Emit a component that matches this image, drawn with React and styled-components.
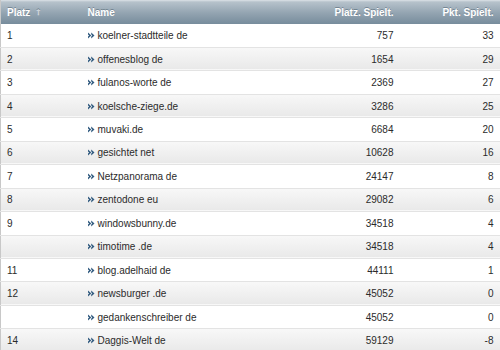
import React from "react";
import styled, { createGlobalStyle } from "styled-components";

const GlobalStyle = createGlobalStyle`
  html, body {
    margin: 0;
    padding: 0;
    background: #ffffff;
  }
  body {
    font-family: "Liberation Sans", Arial, sans-serif;
  }
  *, *::before, *::after {
    box-sizing: border-box;
  }
`;

const rows = [
  { platz: "1", name: "koelner-stadtteile de", spielt: 757, pkt: 33 },
  { platz: "2", name: "offenesblog de", spielt: 1654, pkt: 29 },
  { platz: "3", name: "fulanos-worte de", spielt: 2369, pkt: 27 },
  { platz: "4", name: "koelsche-ziege.de", spielt: 3286, pkt: 25 },
  { platz: "5", name: "muvaki.de", spielt: 6684, pkt: 20 },
  { platz: "6", name: "gesichtet net", spielt: 10628, pkt: 16 },
  { platz: "7", name: "Netzpanorama de", spielt: 24147, pkt: 8 },
  { platz: "8", name: "zentodone eu", spielt: 29082, pkt: 6 },
  { platz: "9", name: "windowsbunny.de", spielt: 34518, pkt: 4 },
  { platz: "", name: "timotime .de", spielt: 34518, pkt: 4 },
  { platz: "11", name: "blog.adelhaid de", spielt: 44111, pkt: 1 },
  { platz: "12", name: "newsburger .de", spielt: 45052, pkt: 0 },
  { platz: "", name: "gedankenschreiber de", spielt: 45052, pkt: 0 },
  { platz: "14", name: "Daggis-Welt de", spielt: 59129, pkt: -8 },
];

const Table = styled.table`
  width: 500px;
  border-collapse: collapse;
  table-layout: fixed;
  font-size: 10px;
  color: #2b2b2b;
  border-left: 1px solid #c8c8c8;
`;

const HeadRow = styled.tr`
  height: 24px;
  background: linear-gradient(#dce2e7 0px, #b6c2cb 2px, #93a4b1 13px, #778c9c 24px);
`;

const Th = styled.th`
  padding: 0 7px 0 6px;
  font-size: 10px;
  font-weight: bold;
  color: #ffffff;
  text-shadow: 0 -1px 0 rgba(60, 80, 95, 0.45);
  text-align: ${({ $right }) => ($right ? "right" : "left")};
  white-space: nowrap;
`;

const SortMark = styled.span`
  display: inline-block;
  margin-left: 6px;
  color: #cdd5db;
  font-size: 8px;
  vertical-align: 1px;
`;

const Row = styled.tr`
  height: 23.46px;
  background: ${({ $even }) =>
    $even ? "linear-gradient(#f8f8f8, #e9e9e9)" : "#ffffff"};
  border-bottom: 1px solid #e3e3e3;
`;

const Td = styled.td`
  padding: 0 7px 0 6px;
  text-align: ${({ $right }) => ($right ? "right" : "left")};
  white-space: nowrap;
`;

const NameCell = styled.span`
  display: inline-flex;
  align-items: center;
  gap: 3px;
`;

const Chevrons = () => (
  <svg width="7" height="7" viewBox="0 0 7 7">
    <path d="M0 0.6 L3.3 3.5 L0 6.4 L0 4.4 L1.1 3.5 L0 2.6 Z" fill="#335c80" />
    <path d="M3.2 0.6 L6.5 3.5 L3.2 6.4 L3.2 4.4 L4.3 3.5 L3.2 2.6 Z" fill="#335c80" />
  </svg>
);

export default function App() {
  return (
    <>
      <GlobalStyle />
      <Table>
        <colgroup>
          <col style={{ width: "81px" }} />
          <col style={{ width: "170px" }} />
          <col style={{ width: "149px" }} />
          <col style={{ width: "100px" }} />
        </colgroup>
        <thead>
          <HeadRow>
            <Th>
              Platz<SortMark>&#x2B61;</SortMark>
            </Th>
            <Th>Name</Th>
            <Th $right>Platz. Spielt.</Th>
            <Th $right>Pkt. Spielt.</Th>
          </HeadRow>
        </thead>
        <tbody>
          {rows.map((r, i) => (
            <Row key={i} $even={i % 2 === 1}>
              <Td>{r.platz}</Td>
              <Td>
                <NameCell>
                  <Chevrons />
                  {r.name}
                </NameCell>
              </Td>
              <Td $right>{r.spielt}</Td>
              <Td $right>{r.pkt}</Td>
            </Row>
          ))}
        </tbody>
      </Table>
    </>
  );
}
